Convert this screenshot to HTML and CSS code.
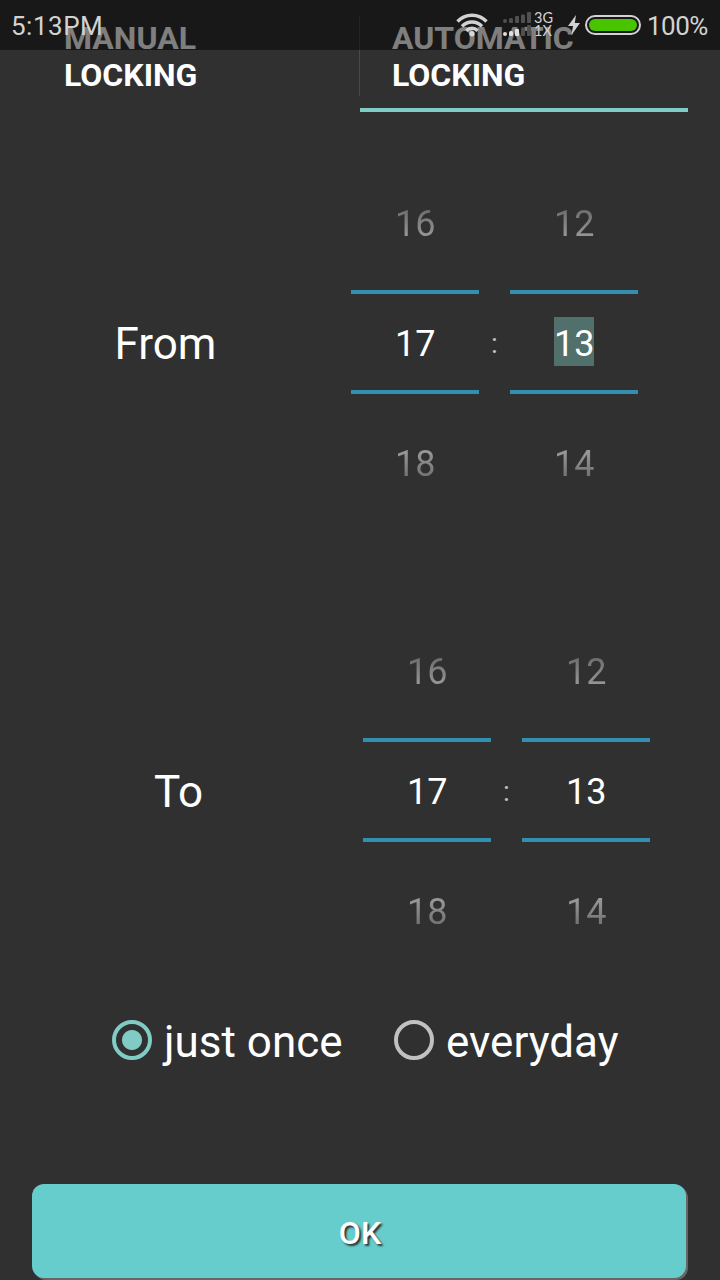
FILE: index.html
```html
<!DOCTYPE html>
<html lang="en">
<head>
	<meta charset="UTF-8">
	<title>Automatic Locking</title>
	<link rel="stylesheet" href="styles.css">
</head>

<body>
	<div class="statusbar">
		<span class="clock">5:13PM</span>
		<svg class="wifi" width="34" height="26" viewBox="0 0 34 26">
			<path d="M2.5 9.5a20 20 0 0 1 29 0M7 14.3a13.7 13.7 0 0 1 20 0M11.3 18.7a8 8 0 0 1 11.4 0" fill="none" stroke="#d2d2d2" stroke-width="3.4"/>
			<circle cx="17" cy="21.8" r="2.7" fill="#d8d8d8"/>
		</svg>
		<svg class="signal" width="30" height="26" viewBox="0 0 30 26">
			<g fill="#505050">
				<rect x="1" y="7" width="4" height="4" rx="2"/>
				<rect x="7" y="6" width="4" height="5" rx="1.5"/>
				<rect x="13" y="4" width="4" height="7" rx="1"/>
				<rect x="19" y="2.5" width="4" height="8.500" rx="1"/>
				<rect x="25" y="0" width="4" height="11" rx="1"/>
				<rect x="19" y="15.500" width="4" height="8.500" rx="1"/>
				<rect x="25" y="13" width="4" height="11" rx="1"/>
			</g>
			<g fill="#e0e0e0">
				<rect x="1" y="20" width="4" height="4" rx="2"/>
				<rect x="7" y="19" width="4" height="5" rx="1.5"/>
				<rect x="13" y="17" width="4" height="7" rx="1"/>
			</g>
		</svg>
		<div class="network">
			<div>3G</div>
			<div>1X</div>
		</div>
		<svg class="bolt" width="12" height="20" viewBox="0 0 12 20">
			<path d="M8 0L0 11h5L3.500 20 12 8H6.800z" fill="#d2d2d2"/>
		</svg>
		<div class="battery"><div class="level"></div></div>
		<span class="percent">100%</span>
	</div>

	<div class="tabs">
		<div class="tab">MANUAL<br>LOCKING</div>
		<div class="tab active">AUTOMATIC<br>LOCKING</div>
	</div>

	<div class="row from">
		<div class="label">From</div>
		<div class="picker">
			<div class="value above">16</div>
			<div class="current"><div class="value">17</div></div>
			<div class="value below">18</div>
		</div>
		<div class="colon">:</div>
		<div class="picker">
			<div class="value above">12</div>
			<div class="current"><div class="value selected">13</div></div>
			<div class="value below">14</div>
		</div>
	</div>

	<div class="row to">
		<div class="label">To</div>
		<div class="picker">
			<div class="value above">16</div>
			<div class="current"><div class="value">17</div></div>
			<div class="value below">18</div>
		</div>
		<div class="colon">:</div>
		<div class="picker">
			<div class="value above">12</div>
			<div class="current"><div class="value">13</div></div>
			<div class="value below">14</div>
		</div>
	</div>

	<div class="repeat">
		<div class="option checked"><span class="radio"></span><span class="text">just once</span></div>
		<div class="option"><span class="radio"></span><span class="text">everyday</span></div>
	</div>

	<div class="ok">OK</div>
</body>
</html>
```

FILE: styles.css
```css
* {
	box-sizing: border-box;
}
body {
	margin: 0;
	width: 720px;
	height: 1280px;
	overflow: hidden;
	display: flex;
	flex-direction: column;
	background: #303030;
	color: white;
	font-family: Roboto, sans-serif;
}

/* status bar lies over the tabs */
.statusbar {
	position: absolute;
	top: 0;
	left: 0;
	width: 720px;
	height: 50px;
	padding: 0 12px 0 11px;
	display: flex;
	align-items: center;
	background: rgba(0, 0, 0, 0.5);
	color: #d2d2d2;
	font-size: 26px;
	line-height: 52px;
}
.clock {
	flex: 1;
	padding-top: 2px;
	letter-spacing: 0.5px;
}
.wifi {
	margin-right: 13px;
}
.signal {
	margin-right: 2px;
}
.network {
	width: 34px;
	padding-bottom: 2px;
	font-family: Lato, sans-serif;
	font-size: 14.5px;
	line-height: 13px;
}
.bolt {
	margin-right: 5px;
}
.battery {
	width: 56px;
	height: 20px;
	padding: 2px;
	border: 2px solid #d2d2d2;
	border-radius: 10px;
}
.level {
	height: 12px;
	border-radius: 6px;
	background: #48c400;
}
.percent {
	width: 61px;
	margin-left: 6px;
	padding-top: 2px;
	letter-spacing: -0.5px;
}

.tabs {
	display: flex;
	height: 112px;
	padding: 0 32px;
	background: linear-gradient(#484848, #484848) 359px 16px / 1px 80px no-repeat;
}
.tab {
	width: 328px;
	padding: 20px 32px 0;
	font-size: 32px;
	font-weight: bold;
	line-height: 37px;
}
.active {
	border-bottom: 4px solid #80cbc4;
}

.row {
	display: flex;
	height: 448px;
	padding-top: 87px;
}
.label {
	width: 331px;
	margin-right: 20px;
	padding-top: 119px;
	font-size: 44px;
	line-height: 52px;
	text-align: center;
}
.to .label {
	width: 357px;
	margin-right: 6px;
}
.picker {
	width: 128px;
	display: flex;
	flex-direction: column;
	align-items: center;
}
.value {
	width: 40px;
	height: 49px;
	font-size: 36px;
	line-height: 55px;
	text-align: center;
}
.current {
	width: 128px;
	height: 104px;
	margin: 42px 0 45px;
	padding-top: 23px;
	display: flex;
	justify-content: center;
	border-top: 4px solid #338fb0;
	border-bottom: 4px solid #338fb0;
}
.selected {
	background: #51706c;
}
.above, .below {
	line-height: 51px;
	color: transparent;
	background: linear-gradient(#6c6c6c 20%, #9c9c9c 85%);
	-webkit-background-clip: text;
	background-clip: text;
}
.below {
	background-image: linear-gradient(#9c9c9c 20%, #6c6c6c 85%);
}
.colon {
	width: 31px;
	padding-top: 128px;
	color: #c1c1c1;
	font-size: 28px;
	line-height: 33px;
	text-align: center;
}

.repeat {
	display: flex;
	height: 176px;
	padding: 6px 0 0 112px;
}
.option {
	display: flex;
	width: 282px;
	height: 52px;
	align-items: center;
	font-size: 44px;
	line-height: 52px;
}
.text {
	padding-top: 4px;
}
.radio {
	width: 40px;
	height: 40px;
	margin-right: 12px;
	border: 4px solid #c1c1c1;
	border-radius: 50%;
}
.checked .radio {
	border-color: #80cbc4;
	background: radial-gradient(#80cbc4 9.500px, transparent 10.500px);
}

.ok {
	width: 654px;
	height: 94px;
	margin-left: 32px;
	padding-left: 2px;
	border-radius: 12px;
	background: #66cdcc;
	box-shadow: 2px 2px 0 #666;
	font-size: 32px;
	font-weight: 500;
	line-height: 98px;
	text-align: center;
	text-shadow: 2px 2px 2px #333;
}
```
